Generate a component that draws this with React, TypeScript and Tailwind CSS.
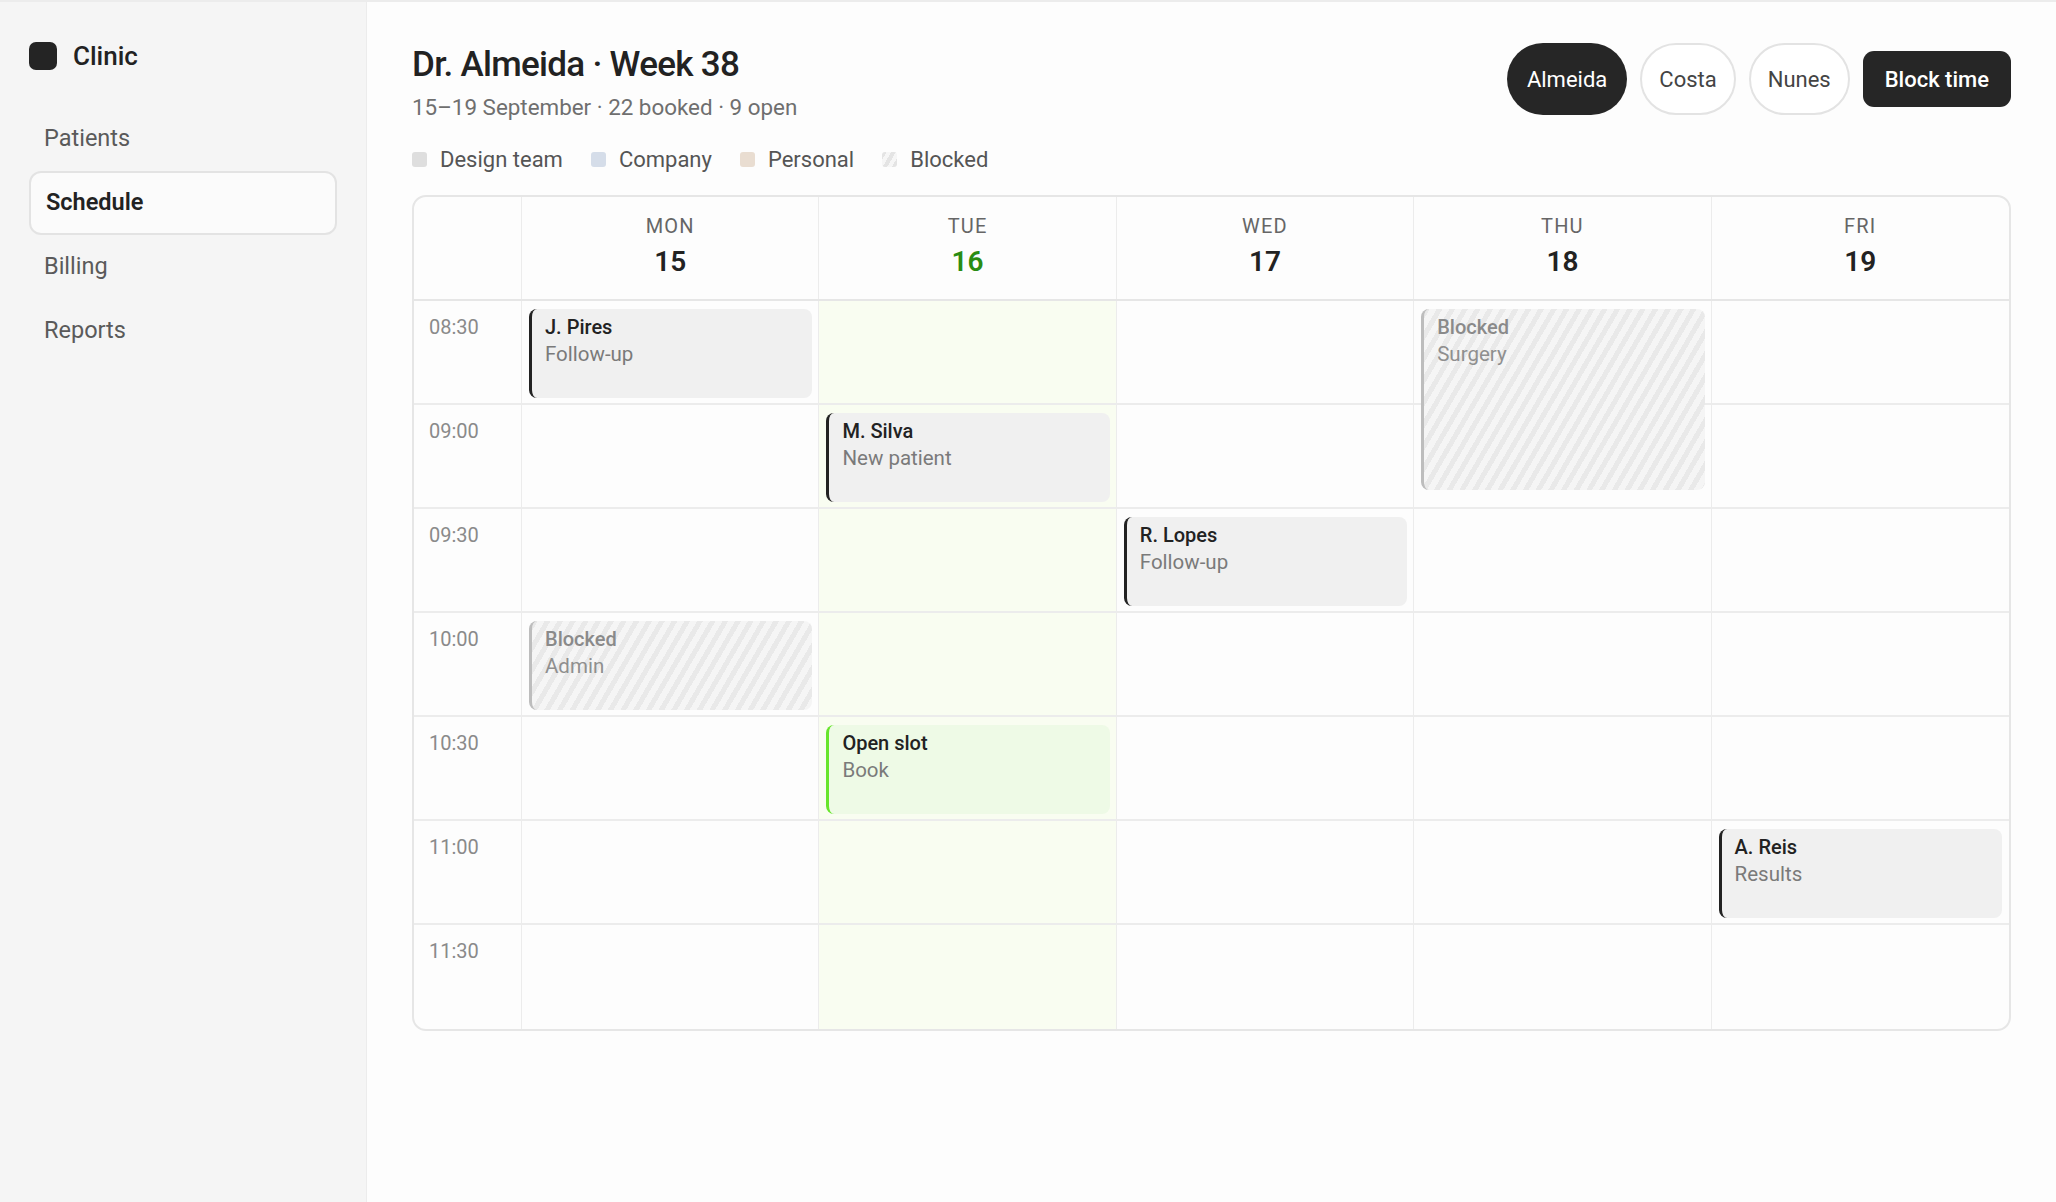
import React from 'react';

const font = { fontFamily: 'Roboto, "Noto Sans", sans-serif' };

const days = [
    { dow: 'MON', num: '15' },
    { dow: 'TUE', num: '16', today: true },
    { dow: 'WED', num: '17' },
    { dow: 'THU', num: '18' },
    { dow: 'FRI', num: '19' },
];

const times = ['08:30', '09:00', '09:30', '10:00', '10:30', '11:00', '11:30'];

const colStart = ['col-start-1', 'col-start-2', 'col-start-3', 'col-start-4', 'col-start-5', 'col-start-6'];
const rowStart = ['row-start-1', 'row-start-2', 'row-start-3', 'row-start-4', 'row-start-5', 'row-start-6', 'row-start-7'];

type Kind = 'booked' | 'blocked' | 'open';

const events: { day: number; row: number; title: string; sub: string; kind: Kind; size: string }[] = [
    { day: 0, row: 0, title: 'J. Pires', sub: 'Follow-up', kind: 'booked', size: 'row-span-1 mb-[7px]' },
    { day: 1, row: 1, title: 'M. Silva', sub: 'New patient', kind: 'booked', size: 'row-span-1 mb-[7px]' },
    { day: 2, row: 2, title: 'R. Lopes', sub: 'Follow-up', kind: 'booked', size: 'row-span-1 mb-[7px]' },
    { day: 3, row: 0, title: 'Blocked', sub: 'Surgery', kind: 'blocked', size: 'row-span-2 mb-[19px]' },
    { day: 0, row: 3, title: 'Blocked', sub: 'Admin', kind: 'blocked', size: 'row-span-1 mb-[7px]' },
    { day: 1, row: 4, title: 'Open slot', sub: 'Book', kind: 'open', size: 'row-span-1 mb-[7px]' },
    { day: 4, row: 5, title: 'A. Reis', sub: 'Results', kind: 'booked', size: 'row-span-1 mb-[7px]' },
];

const kindStyle: Record<Kind, string> = {
    booked: 'border-[#222] bg-[#f0f0f0]',
    blocked: 'border-[#bdbdbd] bg-[repeating-linear-gradient(120deg,#e9e9e9_0px,#e9e9e9_5px,#f5f5f5_5px,#f5f5f5_11px)]',
    open: 'border-[#66e52a] bg-[#eefae6]',
};

const legend = [
    { label: 'Design team', sw: 'bg-[#dedede]' },
    { label: 'Company', sw: 'bg-[#d5dde9]' },
    { label: 'Personal', sw: 'bg-[#e9ddd1]' },
    { label: 'Blocked', sw: 'bg-[repeating-linear-gradient(120deg,#e4e4e4_0px,#e4e4e4_4px,#f6f6f6_4px,#f6f6f6_8px)]' },
];

export default function App() {
    return (
        <div className="flex h-[1202px] w-full border-t-2 border-[#ececec] bg-[#fdfdfd] text-[#222]" style={font}>
            <aside className="flex w-[367px] shrink-0 flex-col border-r border-[#ececec] bg-[#f5f5f5] px-[29px] pt-[40px]">
                <div className="flex h-[28px] items-center gap-[16px]">
                    <div className="h-[28px] w-[28px] rounded-[7px] bg-[#242424]" />
                    <span className="text-[26px] font-medium">Clinic</span>
                </div>
                <nav className="mt-[37px] flex flex-col">
                    {['Patients', 'Schedule', 'Billing', 'Reports'].map((n) => (
                        <div
                            key={n}
                            className={
                                n === 'Schedule'
                                    ? 'flex h-[64px] items-center rounded-[12px] border-2 border-[#e3e3e3] bg-[#fbfbfb] px-[15px] text-[23.5px] font-semibold text-[#222]'
                                    : 'flex h-[64px] items-center px-[15px] text-[23.5px] text-[#5a5a5a]'
                            }
                        >
                            {n}
                        </div>
                    ))}
                </nav>
            </aside>

            <main className="flex-1 px-[45px] pt-[41px]">
                <div className="flex items-start justify-between">
                    <div>
                        <h1 className="text-[35px] leading-[44px] font-medium tracking-[-0.02em]">Dr. Almeida · Week 38</h1>
                        <p className="mt-[5px] text-[22.4px] leading-[30px] text-[#6f6f6f]">15–19 September · 22 booked · 9 open</p>
                        <div className="mt-[23px] flex h-[28px] items-center gap-[28px]">
                            {legend.map((l) => (
                                <div key={l.label} className="flex items-center gap-[13px]">
                                    <span className={`h-[15px] w-[15px] rounded-[3px] ${l.sw}`} />
                                    <span className="text-[22px] text-[#555]">{l.label}</span>
                                </div>
                            ))}
                        </div>
                    </div>
                    <div className="flex items-center gap-[13px]">
                        <button className="h-[72px] rounded-full bg-[#262626] px-[20px] text-[22px] text-white">Almeida</button>
                        <button className="h-[72px] rounded-full border-2 border-[#e3e3e3] bg-white px-[17px] text-[22px] text-[#444]">Costa</button>
                        <button className="h-[72px] rounded-full border-2 border-[#e3e3e3] bg-white px-[17px] text-[22px] text-[#444]">Nunes</button>
                        <button className="h-[56px] rounded-[11px] bg-[#262626] px-[22px] text-[22px] font-medium text-white">Block time</button>
                    </div>
                </div>

                <div className="mt-[22px] overflow-hidden rounded-[14px] border-2 border-[#e6e6e6] bg-[#fdfdfd]">
                    <div className="grid h-[104px] grid-cols-[108px_repeat(5,1fr)] border-b-2 border-[#e6e6e6]">
                        <div className="border-r border-[#ececec]" />
                        {days.map((d, i) => (
                            <div key={d.dow} className={`flex flex-col items-center pt-[12px] ${i < 4 ? 'border-r border-[#ececec]' : ''}`}>
                                <span className="text-[20px] leading-[34px] tracking-[0.06em] text-[#666]">{d.dow}</span>
                                <span className={`text-[28px] leading-[38px] font-semibold ${d.today ? 'text-[#2a8c12]' : 'text-[#222]'}`}>{d.num}</span>
                            </div>
                        ))}
                    </div>
                    <div className="grid grid-cols-[108px_repeat(5,1fr)] grid-rows-[repeat(7,104px)]">
                        {times.map((t, r) => (
                            <React.Fragment key={t}>
                                <div className={`${colStart[0]} ${rowStart[r]} border-r border-[#ececec] px-[15px] pt-[13px] text-[20px] leading-[26px] text-[#8a8a8a] ${r < 6 ? 'border-b-2' : ''} border-b-[#ececec]`}>
                                    {t}
                                </div>
                                {days.map((d, c) => (
                                    <div
                                        key={d.dow}
                                        className={`${colStart[c + 1]} ${rowStart[r]} ${d.today ? 'bg-[#f9fdf1]' : ''} ${c < 4 ? 'border-r border-r-[#ececec]' : ''} ${r < 6 ? 'border-b-2 border-b-[#ececec]' : ''}`}
                                    />
                                ))}
                            </React.Fragment>
                        ))}
                        {events.map((e) => (
                            <div
                                key={e.title + e.day + e.row}
                                className={`${colStart[e.day + 1]} ${rowStart[e.row]} ${e.size} mx-[7px] mt-[8px] rounded-[8px] border-l-[3px] pl-[13px] pt-[5px] ${kindStyle[e.kind]}`}
                            >
                                <div className={`text-[20px] leading-[27px] font-medium ${e.kind === 'blocked' ? 'text-[#8a8a8a]' : 'text-[#222]'}`}>{e.title}</div>
                                <div className={`text-[20.5px] leading-[26px] ${e.kind === 'blocked' ? 'text-[#8f8f8f]' : 'text-[#7a7a7a]'}`}>{e.sub}</div>
                            </div>
                        ))}
                    </div>
                </div>
            </main>
        </div>
    );
}
